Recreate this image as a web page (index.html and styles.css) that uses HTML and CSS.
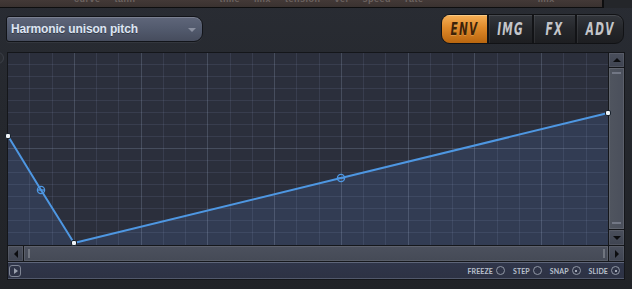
FILE: index.html
```html
<!DOCTYPE html>
<html>
<head>
<meta charset="utf-8">
<link rel="stylesheet" href="styles.css">
</head>
<body>
<div class="top-strip">
  <div class="top-panel">
    <span class="faint">curve</span><span class="faint">tanh</span><span class="faint gap1">time</span><span class="faint">mix</span><span class="faint">tension</span><span class="faint">vel</span><span class="faint">speed</span><span class="faint">rate</span><span class="faint gap2">mix</span>
  </div>
</div>
<div class="header">
  <div class="dropdown">
    <span class="dd-label">Harmonic unison pitch</span>
    <span class="dd-arrow"></span>
  </div>
  <div class="tabs">
    <div class="tab active"><span>ENV</span></div>
    <div class="tab"><span>IMG</span></div>
    <div class="tab"><span>FX</span></div>
    <div class="tab last"><span>ADV</span></div>
  </div>
</div>
<div class="editor">
  <div class="side"><span class="knob"></span></div>
  <div class="frame">
    <div class="row-main">
      <div class="graph">
        <svg class="plot" width="600" height="192" viewBox="0 0 600 192">
          <rect x="0" y="0" width="600" height="192" fill="#2b2f3c"/>
          <polygon points="0,83 33,137 66,190 333,125 600,60 600,192 0,192" fill="#323c53"/>
          <path d="M21.5 0V192M44.5 0V192M88.5 0V192M110.5 0V192M155.5 0V192M177.5 0V192M222.5 0V192M244.5 0V192M288.5 0V192M311.5 0V192M355.5 0V192M377.5 0V192M422.5 0V192M444.5 0V192M489.5 0V192M511.5 0V192M555.5 0V192M578.5 0V192M0 11.5H600M0 23.5H600M0 35.5H600M0 47.5H600M0 59.5H600M0 71.5H600M0 83.5H600M0 107.5H600M0 119.5H600M0 131.5H600M0 143.5H600M0 155.5H600M0 167.5H600M0 179.5H600" stroke="rgba(150,165,200,0.13)" stroke-width="1" fill="none"/>
          <path d="M66.5 0V192M133.5 0V192M199.5 0V192M266.5 0V192M333.5 0V192M400.5 0V192M466.5 0V192M533.5 0V192M0 95.5H600" stroke="rgba(170,185,215,0.22)" stroke-width="1" fill="none"/>
          <polyline points="0,83 33,137 66,190 333,125 600,60" fill="none" stroke="#4e97e2" stroke-width="2" stroke-linejoin="round"/>
          <g fill="none" stroke="#4e97e2" stroke-width="1.3">
            <circle cx="33" cy="137" r="3.6"/>
            <path d="M30 137H36"/>
            <circle cx="333" cy="125" r="3.6"/>
            <path d="M330 125H336"/>
          </g>
          <g fill="#eef3f7" stroke="#18212c" stroke-width="1">
            <rect x="-2.5" y="80.5" width="5" height="5" rx="1.5"/>
            <rect x="63.5" y="187.5" width="5" height="5" rx="1.5"/>
            <rect x="597.5" y="57.5" width="5" height="5" rx="1.5"/>
          </g>
        </svg>
      </div>
      <div class="vsep"></div>
      <div class="vscroll">
        <div class="sbtn"><span class="tri up"></span></div>
        <div class="hline"></div>
        <div class="vtrack"><span class="grip-h top"></span><span class="grip-h bottom"></span></div>
        <div class="hline"></div>
        <div class="sbtn tall"><span class="tri down"></span></div>
      </div>
    </div>
    <div class="hline"></div>
    <div class="hscroll">
      <div class="sbtn wide"><span class="tri left"></span></div>
      <div class="vsep"></div>
      <div class="htrack"><span class="grip-v"></span><span class="grip-v"></span></div>
      <div class="vsep"></div>
      <div class="sbtn wide"><span class="tri right"></span></div>
    </div>
    <div class="hline"></div>
    <div class="bottombar">
      <div class="play"><span class="tri right small"></span></div>
      <div class="opts">
        <span class="opt">FREEZE</span><span class="radio"></span>
        <span class="opt">STEP</span><span class="radio"></span>
        <span class="opt">SNAP</span><span class="radio on"></span>
        <span class="opt">SLIDE</span><span class="radio on"></span>
      </div>
    </div>
  </div>
</div>
</body>
</html>
```

FILE: styles.css
```css
* { box-sizing: border-box; }
html, body { margin: 0; padding: 0; }
body {
  width: 632px;
  height: 289px;
  overflow: hidden;
  background: linear-gradient(180deg, #292c33 0%, #25282e 40%, #212327 100%);
  font-family: "Liberation Sans", Arial, sans-serif;
}

.top-strip {
  height: 8px;
  background: #24262a;
}
.top-panel {
  width: 604px;
  height: 8px;
  background: linear-gradient(180deg, #433937, #3a3230);
  border-right: 2px solid #0e0e0f;
  border-bottom: 1px solid #0e0e0f;
  display: flex;
  gap: 14px;
  padding-left: 74px;
  overflow: hidden;
}
.faint {
  font-size: 9px;
  font-weight: bold;
  color: #6d6461;
  line-height: 9px;
  margin-top: -5px;
  letter-spacing: 0.5px;
}
.gap1 { margin-left: 70px; }
.gap2 { margin-left: 100px; }

.header {
  height: 44px;
  display: flex;
  justify-content: space-between;
  padding: 0 8px 0 6px;
}
.dropdown {
  margin-top: 8px;
  width: 197px;
  height: 26px;
  border-radius: 3px 9px 9px 3px;
  background: linear-gradient(180deg, #5f667a 0%, #525a6d 50%, #464c5d 100%);
  border: 1px solid #121419;
  box-shadow: inset 0 1px 0 rgba(255,255,255,0.18), 0 1px 0 rgba(255,255,255,0.06);
  display: flex;
  align-items: center;
  justify-content: space-between;
  padding: 0 6px 0 4px;
}
.dd-label {
  color: #dde5f3;
  font-weight: bold;
  font-size: 12px;
  letter-spacing: -0.15px;
  text-shadow: 0 1px 0 rgba(0,0,0,0.35);
}
.dd-arrow {
  width: 0; height: 0;
  border-left: 4px solid transparent;
  border-right: 4px solid transparent;
  border-top: 4px solid #8a90a0;
  margin-top: 1px;
}

.tabs {
  margin-top: 6px;
  width: 183px;
  height: 30px;
  display: flex;
  border-radius: 9px;
  background: linear-gradient(180deg, #33363c 0%, #25272b 50%, #1d1e21 100%);
  border: 1px solid #111215;
  box-shadow: inset 0 1px 0 rgba(255,255,255,0.1);
  overflow: hidden;
}
.tab {
  flex: 1;
  display: flex;
  align-items: center;
  justify-content: center;
  border-left: 2px solid #121316;
  box-shadow: inset 1px 0 0 rgba(255,255,255,0.07);
}
.tab:first-child { border-left: none; }
.tab span {
  font-family: "DejaVu Sans", sans-serif;
  font-style: italic;
  font-weight: bold;
  font-size: 17px;
  color: #c4c6ca;
  letter-spacing: 2px;
  display: inline-block;
  transform: scaleX(0.62);
}
.tab.active {
  background: linear-gradient(180deg, #f6b057 0%, #e08a2a 45%, #b9660f 100%);
  box-shadow: inset 0 1px 0 rgba(255,230,180,0.5);
}
.tab.active span {
  color: #3d2208;
  text-shadow: 0 1px 0 rgba(255,200,130,0.35);
}

.editor {
  display: flex;
}
.side {
  width: 7px;
  height: 228px;
  position: relative;
  overflow: hidden;
}
.knob {
  position: absolute;
  left: -8px;
  top: 0;
  width: 12px;
  height: 12px;
  border-radius: 50%;
  border: 1px solid #3c4048;
  background: #2a2d33;
}
.frame {
  width: 618px;
  height: 228px;
  border: 1px solid #14161a;
  background: #1b1d22;
  display: flex;
  flex-direction: column;
}
.row-main {
  display: flex;
  height: 192px;
}
.graph {
  width: 600px;
  height: 192px;
  position: relative;
  z-index: 2;
}
.plot { display: block; overflow: visible; }
.vsep { width: 1px; background: #15171b; }
.hline { height: 1px; background: #15171b; }

.vscroll {
  width: 15px;
  display: flex;
  flex-direction: column;
  background: #2b2e36;
}
.sbtn {
  height: 14px;
  background: linear-gradient(180deg, #4a4f5c, #3f4451);
  box-shadow: inset 0 0 0 1px rgba(255,255,255,0.08);
  display: flex;
  align-items: center;
  justify-content: center;
}
.sbtn.tall { height: 15px; }
.sbtn.wide { width: 15px; height: 15px; }
.vtrack {
  flex: 1;
  background: linear-gradient(90deg, #50555f, #4a4f5b);
  box-shadow: inset 0 0 0 1px rgba(255,255,255,0.1);
  display: flex;
  flex-direction: column;
  justify-content: space-between;
  align-items: center;
  padding: 4px 0 5px;
}
.grip-h {
  width: 9px;
  height: 2px;
  background: #727785;
}
.tri { width: 0; height: 0; display: block; }
.tri.up {
  border-left: 4px solid transparent;
  border-right: 4px solid transparent;
  border-bottom: 4px solid #0c0d10;
}
.tri.down {
  border-left: 4px solid transparent;
  border-right: 4px solid transparent;
  border-top: 4px solid #0c0d10;
}
.tri.left {
  border-top: 4px solid transparent;
  border-bottom: 4px solid transparent;
  border-right: 4px solid #0c0d10;
}
.tri.right {
  border-top: 4px solid transparent;
  border-bottom: 4px solid transparent;
  border-left: 4px solid #0c0d10;
}
.tri.right.small {
  border-top-width: 3px;
  border-bottom-width: 3px;
  border-left: 4px solid #9aa0ad;
  margin-left: 1px;
}

.hscroll {
  height: 15px;
  display: flex;
}
.htrack {
  flex: 1;
  background: linear-gradient(180deg, #4c515e, #454a56);
  box-shadow: inset 0 0 0 1px rgba(255,255,255,0.1);
  display: flex;
  justify-content: space-between;
  align-items: center;
  padding: 0 3px 0 4px;
}
.grip-v {
  width: 2px;
  height: 9px;
  background: #70757f;
}

.bottombar {
  height: 17px;
  background: linear-gradient(180deg, #30364a, #2d3244);
  box-shadow: inset 0 1px 0 rgba(150,160,180,0.45), inset 0 -1px 0 rgba(150,160,180,0.35);
  display: flex;
  align-items: center;
  justify-content: space-between;
  padding: 0 4px 0 1px;
}
.play {
  width: 12px;
  height: 12px;
  border: 1px solid #7f8594;
  border-radius: 3px;
  display: flex;
  align-items: center;
  justify-content: center;
}
.opts {
  display: flex;
  align-items: center;
}
.opt {
  font-family: Lato, "Liberation Sans", sans-serif;
  font-weight: bold;
  font-size: 7px;
  letter-spacing: 0.1px;
  color: #b9c0cc;
  margin-left: 8px;
  margin-right: 3px;
}
.opt:first-child { margin-left: 0; }
.radio {
  width: 9px;
  height: 9px;
  border-radius: 50%;
  border: 1px solid #9097a5;
  position: relative;
}
.radio.on::after {
  content: "";
  position: absolute;
  left: 2.5px;
  top: 2.5px;
  width: 2px;
  height: 2px;
  border-radius: 50%;
  background: #c9ced8;
}
```
